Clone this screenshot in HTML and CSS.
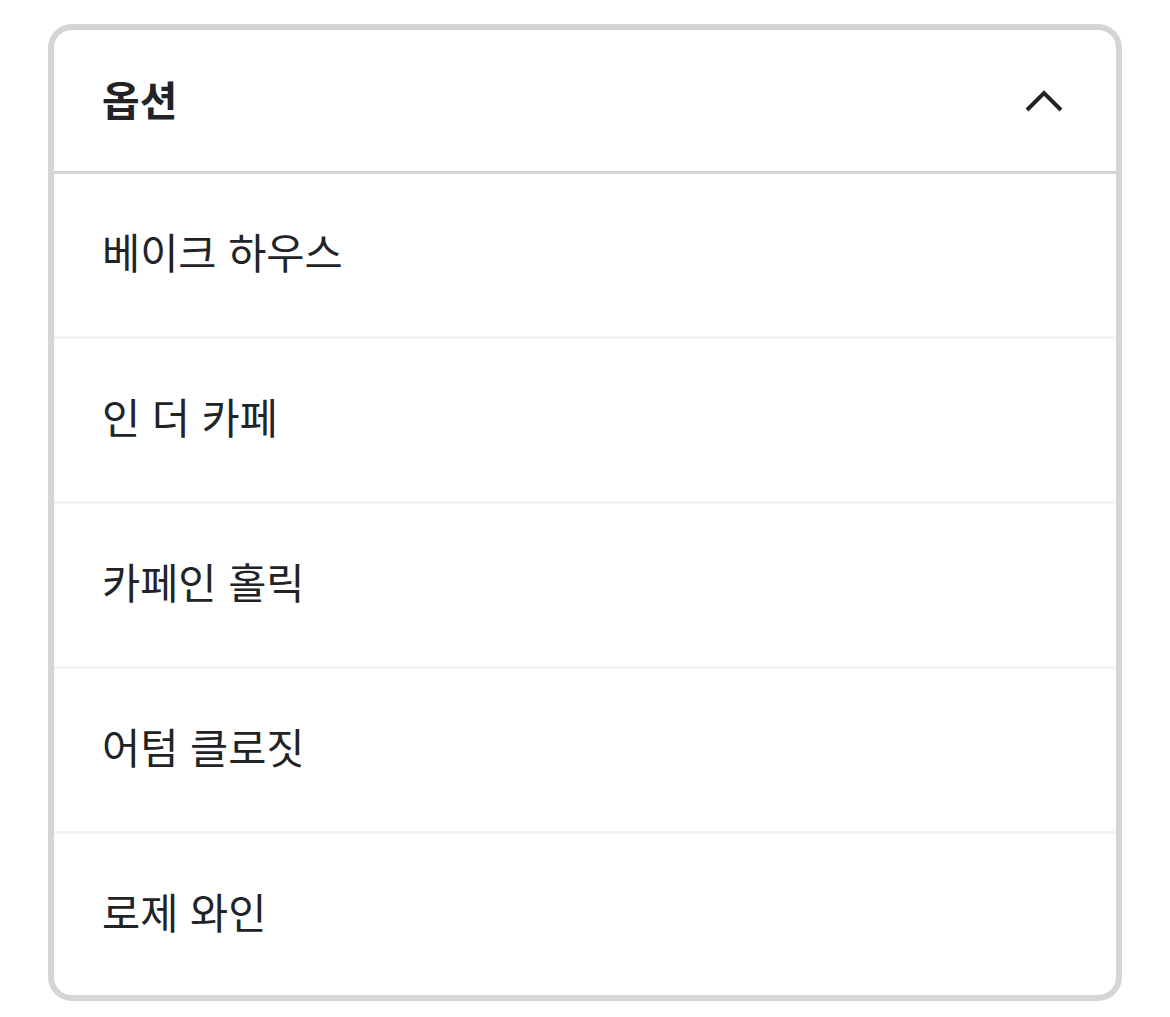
FILE: index.html
```html
<!DOCTYPE html>
<html lang="ko">
<head>
<meta charset="utf-8">
<link rel="stylesheet" href="styles.css">
</head>
<body>
<div class="card">
  <div class="header">
    <span class="title">옵션</span>
    <svg class="chev" width="48" height="48" viewBox="0 0 48 48"><path d="M7 33 L24 16 L41 33" fill="none" stroke="#222326" stroke-width="4"/></svg>
  </div>
  <div class="item">베이크 하우스</div>
  <div class="item">인 더 카페</div>
  <div class="item">카페인 홀릭</div>
  <div class="item">어텀 클로짓</div>
  <div class="item">로제 와인</div>
</div>
</body>
</html>
```
FILE: styles.css
```css
html, body { margin: 0; padding: 0; background: #fff; }
body { padding: 24px 48px 16px; font-family: "Noto Sans CJK KR", "Noto Sans", sans-serif; color: #222326; }
.card {
  border: 6px solid #d4d5d7;
  border-radius: 24px;
  overflow: hidden;
  background: #fff;
}
.header {
  box-sizing: border-box;
  height: 144px;
  display: flex;
  align-items: center;
  justify-content: space-between;
  padding: 0 48px;
  border-bottom: 3px solid #d4d5d7;
}
.title { font-size: 41px; font-weight: 700; line-height: 1; padding-bottom: 4px; }
.chev { display: block; }
.item {
  box-sizing: border-box;
  height: 165px;
  display: flex;
  align-items: center;
  padding: 0 48px 6px;
  font-size: 41.5px;
  font-weight: 400;
  line-height: 1;
  border-bottom: 3px solid #f3f3f4;
}
.item:last-child { border-bottom: none; height: 161px; }
```
